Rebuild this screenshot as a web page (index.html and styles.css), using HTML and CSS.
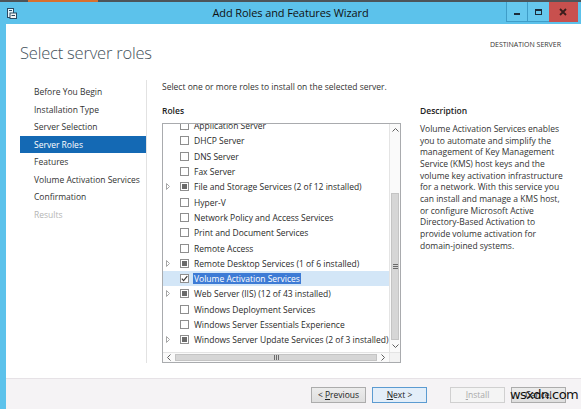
FILE: index.html
```html
<!DOCTYPE html>
<html>
<head>
<meta charset="utf-8">
<title>Add Roles and Features Wizard</title>
<link rel="stylesheet" href="styles.css">
</head>
<body>
<div class="window">
  <div class="topstrip"><span class="orange"></span></div>
  <div class="titlebar">
    <div class="tb-left">
      <svg class="appicon" width="10" height="11" viewBox="0 0 10 11">
        <rect x="0.5" y="0.5" width="6" height="9" fill="#e8f6fc" stroke="#2a4a63"/>
        <rect x="2" y="2" width="3" height="1" fill="#2a4a63"/>
        <rect x="3" y="5" width="6.5" height="5.5" fill="#f4f4f4" stroke="#2a4a63"/>
        <rect x="4.5" y="7" width="3.5" height="1" fill="#2a4a63"/>
      </svg>
    </div>
    <div class="title">Add Roles and Features Wizard</div>
    <div class="tb-right">
      <div class="wb wb-min"><span class="min-glyph"></span></div>
      <div class="wb wb-max"><span class="max-glyph"></span></div>
      <div class="wb-close"><svg class="close-x" width="29" height="20" viewBox="0 0 29 20"><rect x="0" y="0" width="29" height="20" fill="#c8504e"/><path d="M11 7 L17 13 M17 7 L11 13" stroke="#3a1d1c" stroke-width="1.8"/></svg></div>
    </div>
  </div>
  <div class="frame">
    <div class="content">
      <div class="header">
        <h1 class="page-title">Select server roles</h1>
        <div class="dest">DESTINATION SERVER</div>
      </div>
      <div class="columns">
        <nav class="nav">
          <div class="nav-item">Before You Begin</div>
          <div class="nav-item">Installation Type</div>
          <div class="nav-item">Server Selection</div>
          <div class="nav-item active">Server Roles</div>
          <div class="nav-item">Features</div>
          <div class="nav-item">Volume Activation Services</div>
          <div class="nav-item">Confirmation</div>
          <div class="nav-item disabled">Results</div>
        </nav>
        <div class="main">
          <p class="intro">Select one or more roles to install on the selected server.</p>
          <div class="panes">
            <div class="roles-pane">
              <h2 class="pane-title">Roles</h2>
              <div class="listbox">
                <div class="list-view">
                  <div class="list-rows">
                    <div class="row"><span class="exp"></span><span class="cb"></span><span class="label">Application Server</span></div>
                    <div class="row"><span class="exp"></span><span class="cb"></span><span class="label">DHCP Server</span></div>
                    <div class="row"><span class="exp"></span><span class="cb"></span><span class="label">DNS Server</span></div>
                    <div class="row"><span class="exp"></span><span class="cb"></span><span class="label">Fax Server</span></div>
                    <div class="row"><span class="exp"><svg width="4" height="7" viewBox="0 0 4 7"><path d="M0.5 0.5 L3.5 3.5 L0.5 6.5 Z" fill="none" stroke="#a6a6a6"/></svg></span><span class="cb ind"></span><span class="label">File and Storage Services (2 of 12 installed)</span></div>
                    <div class="row"><span class="exp"></span><span class="cb"></span><span class="label">Hyper-V</span></div>
                    <div class="row"><span class="exp"></span><span class="cb"></span><span class="label">Network Policy and Access Services</span></div>
                    <div class="row"><span class="exp"></span><span class="cb"></span><span class="label">Print and Document Services</span></div>
                    <div class="row"><span class="exp"></span><span class="cb"></span><span class="label">Remote Access</span></div>
                    <div class="row"><span class="exp"><svg width="4" height="7" viewBox="0 0 4 7"><path d="M0.5 0.5 L3.5 3.5 L0.5 6.5 Z" fill="none" stroke="#a6a6a6"/></svg></span><span class="cb ind"></span><span class="label">Remote Desktop Services (1 of 6 installed)</span></div>
                    <div class="row selected"><span class="exp"></span><span class="cb chk"><svg width="7" height="7" viewBox="0 0 7 7"><path d="M0.8 3.6 L2.6 5.6 L6.3 1.2" fill="none" stroke="#3a3a3a" stroke-width="1.2"/></svg></span><span class="label sel">Volume Activation Services</span></div>
                    <div class="row"><span class="exp"><svg width="4" height="7" viewBox="0 0 4 7"><path d="M0.5 0.5 L3.5 3.5 L0.5 6.5 Z" fill="none" stroke="#a6a6a6"/></svg></span><span class="cb ind"></span><span class="label">Web Server (IIS) (12 of 43 installed)</span></div>
                    <div class="row"><span class="exp"></span><span class="cb"></span><span class="label">Windows Deployment Services</span></div>
                    <div class="row"><span class="exp"></span><span class="cb"></span><span class="label">Windows Server Essentials Experience</span></div>
                    <div class="row"><span class="exp"><svg width="4" height="7" viewBox="0 0 4 7"><path d="M0.5 0.5 L3.5 3.5 L0.5 6.5 Z" fill="none" stroke="#a6a6a6"/></svg></span><span class="cb ind"></span><span class="label">Windows Server Update Services (2 of 3 installed)</span></div>
                  </div>
                </div>
                <div class="vscroll">
                  <div class="sb-arrow"><svg width="7" height="4" viewBox="0 0 7 4"><path d="M0.5 3.5 L3.5 0.5 L6.5 3.5" fill="none" stroke="#606060"/></svg></div>
                  <div class="v-track"></div>
                  <div class="v-thumb"><svg width="5" height="5" viewBox="0 0 5 5"><path d="M0 0.5 H5 M0 2.5 H5 M0 4.5 H5" stroke="#6a6a6a"/></svg></div>
                  <div class="sb-arrow"><svg width="7" height="4" viewBox="0 0 7 4"><path d="M0.5 0.5 L3.5 3.5 L6.5 0.5" fill="none" stroke="#606060"/></svg></div>
                </div>
                <div class="hscroll">
                  <div class="sb-arrow h"><svg width="4" height="7" viewBox="0 0 4 7"><path d="M3.5 0.5 L0.5 3.5 L3.5 6.5" fill="none" stroke="#606060"/></svg></div>
                  <div class="h-thumb"><svg width="5" height="5" viewBox="0 0 5 5"><path d="M0.5 0 V5 M2.5 0 V5 M4.5 0 V5" stroke="#6a6a6a"/></svg></div>
                  <div class="sb-arrow h"><svg width="4" height="7" viewBox="0 0 4 7"><path d="M0.5 0.5 L3.5 3.5 L0.5 6.5" fill="none" stroke="#606060"/></svg></div>
                </div>
                <div class="corner"></div>
              </div>
            </div>
            <div class="desc-pane">
              <h2 class="pane-title">Description</h2>
              <p class="desc">Volume Activation Services enables<br>you to automate and simplify the<br>management of Key Management<br>Service (KMS) host keys and the<br>volume key activation infrastructure<br>for a network. With this service you<br>can install and manage a KMS host,<br>or configure Microsoft Active<br>Directory-Based Activation to<br>provide volume activation for<br>domain-joined systems.</p>
            </div>
          </div>
        </div>
      </div>
    </div>
    <div class="footer">
      <button class="btn">&lt; <u>P</u>revious</button>
      <button class="btn focused"><u>N</u>ext &gt;</button>
      <button class="btn disabled install"><u>I</u>nstall</button>
      <button class="btn">Cancel</button>
    </div>
  </div>
  <div class="watermark">wsxdn.com</div>
</div>
</body>
</html>
```

FILE: styles.css
```css
* { box-sizing: border-box; }

html, body {
  margin: 0;
  padding: 0;
  width: 581px;
  height: 409px;
  overflow: hidden;
  background: #ffffff;
}

body {
  font-family: "Open Sans", "Noto Sans", sans-serif;
  font-size: 8.5px;
  color: #2b2b2b;
}

.window {
  position: relative;
  width: 581px;
  height: 409px;
  display: flex;
  flex-direction: column;
}

.topstrip {
  height: 2px;
  flex: none;
  background: #4d5459;
  display: flex;
}

.orange {
  width: 70px;
  margin-left: 28px;
  background: #d8702f;
}

.titlebar {
  height: 22px;
  flex: none;
  background: #5cc2eb;
  display: flex;
  align-items: flex-start;
}

.tb-left {
  width: 76px;
  flex: none;
  padding: 6px 0 0 7px;
}

.appicon { display: block; }

.title {
  flex: 1;
  text-align: center;
  font-size: 11px;
  line-height: 22px;
  color: #111;
  letter-spacing: -0.1px;
  white-space: nowrap;
}

.tb-right {
  width: 76px;
  height: 20px;
  flex: none;
  display: flex;
  justify-content: flex-end;
  padding-right: 3px;
}

.wb {
  height: 20px;
  flex: none;
  display: flex;
  align-items: center;
  justify-content: center;
}

.wb-min {
  width: 21px;
  border-left: 1px solid #3f9dc8;
  border-bottom: 1px solid #3f9dc8;
  background-color: #66c8ee;
}

.wb-max {
  width: 22px;
  border-left: 1px solid #3f9dc8;
  border-bottom: 1px solid #3f9dc8;
  background-color: #66c8ee;
}

.min-glyph {
  width: 6px;
  height: 2px;
  background-color: #1c2c3a;
  margin-top: 5px;
}

.max-glyph {
  width: 7px;
  height: 6px;
  border: 1px solid #1c2c3a;
  border-top-width: 2px;
}

.wb-close {
  flex: 0 0 29px;
  width: 29px;
  height: 20px;
}

.close-x { display: block; }

.frame {
  flex: 1;
  display: flex;
  flex-direction: column;
  border-left: 6px solid #5cc2eb;
}

.content {
  flex: 1;
  background: #ffffff;
  display: flex;
  flex-direction: column;
}

.header {
  height: 56px;
  display: flex;
  justify-content: space-between;
  align-items: flex-start;
  padding: 16px 20px 0 14px;
}

.page-title {
  margin: 2px 0 0;
  font-size: 16.5px;
  line-height: 22px;
  font-weight: 300;
  letter-spacing: -0.2px;
  color: #44525c;
}

.dest {
  font-size: 7px;
  line-height: 9px;
  color: #333;
}

.columns {
  display: flex;
  align-items: flex-start;
}

.nav {
  width: 141px;
  height: 283px;
  border-right: 1px solid #e2e2e2;
  padding-top: 3px;
}

.nav-item {
  margin-left: 14px;
  padding-left: 14px;
  height: 17.5px;
  line-height: 17.5px;
  color: #333;
  white-space: nowrap;
}

.nav-item.active {
  background: #1469b4;
  color: #ffffff;
}

.nav-item.disabled {
  color: #b4b4b4;
}

.main {
  padding-left: 15px;
  padding-top: 1px;
}

.intro {
  margin: 0;
  line-height: 12px;
  color: #333;
}

.panes {
  display: flex;
  gap: 19px;
  margin-top: 12px;
}

.pane-title {
  margin: 0;
  font-size: 8.5px;
  line-height: 12px;
  font-weight: 600;
  color: #222;
}

.roles-pane {
  width: 239px;
}

.listbox {
  margin-top: 6px;
  width: 239px;
  height: 240px;
  border: 1px solid #a9abae;
  display: grid;
  grid-template-columns: 226px 11px;
  grid-template-rows: 228px 10px;
}

.list-view {
  overflow: hidden;
}

.list-rows {
  margin-top: -6px;
}

.row {
  height: 15.3px;
  display: flex;
  align-items: center;
  white-space: nowrap;
  color: #2a2a2a;
}

.row.selected {
  background: #d3e6f7;
}

.exp {
  width: 17px;
  flex: none;
  display: flex;
  align-items: center;
  padding-left: 3px;
}

.exp svg { display: block; }

.cb {
  width: 9px;
  height: 9px;
  flex: none;
  border: 1px solid #8e8e8e;
  background: #fff;
  display: flex;
  align-items: center;
  justify-content: center;
}

.cb.ind::after {
  content: "";
  width: 5px;
  height: 5px;
  background: #6a6a6a;
}

.cb svg { display: block; }

.label {
  margin-left: 5px;
}

.label.sel {
  background: #3d7bd5;
  color: #fff;
  padding: 0 1px;
  margin-left: 4px;
}

.vscroll {
  display: flex;
  flex-direction: column;
  border-left: 1px solid #e4e4e4;
  background: #fafafa;
}

.sb-arrow {
  height: 12px;
  flex: none;
  display: flex;
  align-items: center;
  justify-content: center;
}

.sb-arrow.h {
  height: auto;
  width: 12px;
}

.sb-arrow svg { display: block; }

.v-track {
  height: 57px;
  flex: none;
}

.v-thumb {
  flex: 1;
  margin: 0 1px;
  background: #d6d6d6;
  border: 1px solid #c4c4c4;
  display: flex;
  align-items: center;
  justify-content: center;
}

.hscroll {
  display: flex;
  border-top: 1px solid #e4e4e4;
  background: #fafafa;
}

.h-thumb {
  flex: 1;
  margin: 1px 0;
  background: #d6d6d6;
  border: 1px solid #c4c4c4;
  display: flex;
  align-items: center;
  justify-content: center;
}

.corner {
  background: #f3f3f3;
  border-left: 1px solid #e4e4e4;
  border-top: 1px solid #e4e4e4;
}

.desc-pane {
  width: 160px;
}

.desc {
  margin: 6px 0 0;
  line-height: 11.67px;
  color: #333;
  white-space: nowrap;
}

.footer {
  height: 31px;
  flex: none;
  background: #f5f3f5;
  border-top: 1px solid #e6e2e6;
  display: flex;
  justify-content: flex-end;
  align-items: flex-start;
  gap: 6px;
  padding: 8px 15px 0 0;
}

.btn {
  width: 55px;
  height: 16px;
  padding: 0;
  font-family: "Open Sans", "Noto Sans", sans-serif;
  font-size: 8.5px;
  line-height: 14px;
  color: #222;
  background: linear-gradient(#ececec, #dedede);
  border: 1px solid #acacac;
  border-radius: 0;
}

.btn u { text-decoration: underline; }

.btn.focused {
  background: #e3eef9;
  border-color: #5b9bd1;
}

.btn.install {
  margin-left: 17px;
}

.btn.disabled {
  background: #f4f4f4;
  border-color: #d0d0d0;
  color: #a9a9a9;
}

.watermark {
  position: absolute;
  left: 510px;
  top: 387px;
  font-family: "DejaVu Sans", sans-serif;
  font-size: 13px;
  line-height: 16px;
  color: #111;
  letter-spacing: -0.6px;
}
```
